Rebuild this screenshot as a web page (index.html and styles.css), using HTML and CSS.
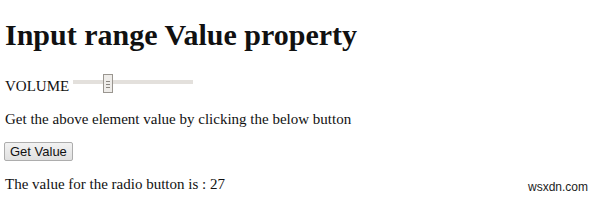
FILE: index.html
```html
<!DOCTYPE html>
<html>
<head>
    <meta charset="UTF-8">
    <title>Input range Value property</title>
    <link rel="stylesheet" href="styles.css">
</head>
<body>
    <h1>Input range Value property</h1>
    <form class="volume-row">
        VOLUME
        <input type="range" id="RANGE1" name="VOL" min="0" max="100" value="27">
    </form>
    <p class="info">Get the above element value by clicking the below button</p>
    <button type="button" onclick="rangeVal()">Get Value</button>
    <p id="Sample" class="result">The value for the radio button is : 27</p>
    <div class="watermark">wsxdn.com</div>

    <script>
        function rangeVal() {
            var r = document.getElementById("RANGE1").value;
            document.getElementById("Sample").innerHTML = "The value for the radio button is : " + r;
        }
    </script>
</body>
</html>
```

FILE: styles.css
```css
body {
    font-family: "Liberation Serif", "Times New Roman", serif;
    font-size: 15px;
    color: #111;
    margin: 0;
    padding: 0 5px;
    background-color: #fff;
    position: relative;
    height: 210px;
}
h1 {
    font-size: 30px;
    margin: 0;
    padding-top: 18px;
    line-height: 34px;
}
.volume-row {
    margin-top: 24px;
    height: 20px;
    display: flex;
    align-items: center;
}
input[type="range"] {
    -webkit-appearance: none;
    appearance: none;
    width: 120px;
    height: 20px;
    margin: -8px 0 0 4px;
    background: transparent;
}
input[type="range"]::-webkit-slider-runnable-track {
    height: 4px;
    background: #e3e0dc;
}
input[type="range"]::-webkit-slider-thumb {
    -webkit-appearance: none;
    width: 10px;
    height: 19px;
    margin-top: -6px;
    border: 1px solid #9a9690;
    box-sizing: border-box;
    background:
        linear-gradient(#8a8680, #8a8680) 2px 6px / 4px 1px no-repeat,
        linear-gradient(#8a8680, #8a8680) 2px 9px / 4px 1px no-repeat,
        linear-gradient(#8a8680, #8a8680) 2px 12px / 4px 1px no-repeat,
        #eeece9;
}
.info {
    margin: 15px 0 14px;
}
.result {
    margin: 15px 0;
}
button {
    font-family: Arial, "Liberation Sans", sans-serif;
    font-size: 13px;
    padding: 1px 5px;
    margin-left: -1px;
    height: 19px;
    border: 1px solid #adadad;
    border-radius: 2px;
    background: linear-gradient(#f2f2f2, #e0e0e0);
    color: #111;
}
.watermark {
    position: absolute;
    right: 12px;
    bottom: 16px;
    font-family: Arial, "Liberation Sans", sans-serif;
    font-size: 12px;
    color: #222;
}
```
